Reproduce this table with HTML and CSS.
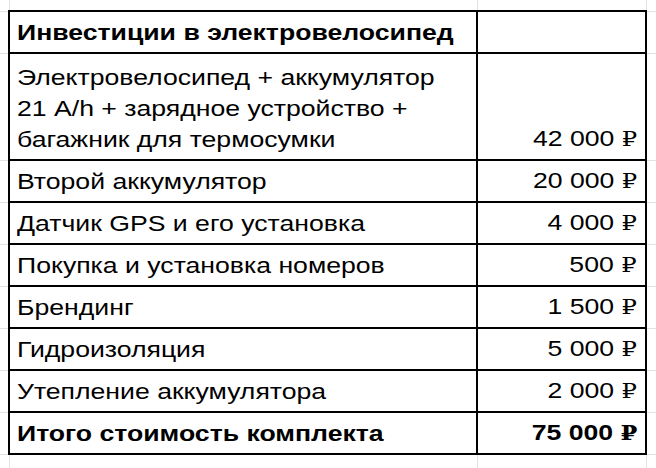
FILE: index.html
```html
<!DOCTYPE html>
<html lang="ru">
<head>
<meta charset="utf-8">
<title>Инвестиции в электровелосипед</title>
<link rel="stylesheet" href="styles.css">
</head>
<body>
<table class="sheet">
  <colgroup>
    <col class="c-edge">
    <col class="c-name">
    <col class="c-sum">
    <col class="c-rest">
  </colgroup>
  <tr class="r-top"><td class="g"></td><td class="g"></td><td class="g"></td><td class="g"></td></tr>
  <tr class="r-one"><td class="g"></td><td class="cell bold"><span class="t">Инвестиции в электровелосипед</span></td><td class="cell num"></td><td class="g"></td></tr>
  <tr class="r-three"><td class="g"></td><td class="cell"><span class="t">Электровелосипед + аккумулятор<br>21 A/h + зарядное устройство +<br>багажник для термосумки</span></td><td class="cell num"><span class="t">42 000 <span class="rub">₽</span></span></td><td class="g"></td></tr>
  <tr class="r-one"><td class="g"></td><td class="cell"><span class="t">Второй аккумулятор</span></td><td class="cell num"><span class="t">20 000 <span class="rub">₽</span></span></td><td class="g"></td></tr>
  <tr class="r-one"><td class="g"></td><td class="cell"><span class="t">Датчик GPS и его установка</span></td><td class="cell num"><span class="t">4 000 <span class="rub">₽</span></span></td><td class="g"></td></tr>
  <tr class="r-one"><td class="g"></td><td class="cell"><span class="t">Покупка и установка номеров</span></td><td class="cell num"><span class="t">500 <span class="rub">₽</span></span></td><td class="g"></td></tr>
  <tr class="r-one"><td class="g"></td><td class="cell"><span class="t">Брендинг</span></td><td class="cell num"><span class="t">1 500 <span class="rub">₽</span></span></td><td class="g"></td></tr>
  <tr class="r-one"><td class="g"></td><td class="cell"><span class="t">Гидроизоляция</span></td><td class="cell num"><span class="t">5 000 <span class="rub">₽</span></span></td><td class="g"></td></tr>
  <tr class="r-one"><td class="g"></td><td class="cell"><span class="t">Утепление аккумулятора</span></td><td class="cell num"><span class="t">2 000 <span class="rub">₽</span></span></td><td class="g"></td></tr>
  <tr class="r-one"><td class="g"></td><td class="cell bold"><span class="t">Итого стоимость комплекта</span></td><td class="cell num bold"><span class="t">75 000 <span class="rub">₽</span></span></td><td class="g"></td></tr>
  <tr class="r-bottom"><td class="g"></td><td class="g"></td><td class="g"></td><td class="g"></td></tr>
</table>
</body>
</html>
```

FILE: styles.css
```css
html, body {
  margin: 0;
  padding: 0;
  background: #ffffff;
}

body {
  width: 656px;
  height: 468px;
  overflow: hidden;
  font-family: "Liberation Sans", Arial, sans-serif;
  font-size: 22px;
  color: #000000;
}

.sheet {
  border-collapse: collapse;
  table-layout: fixed;
  width: 666px;
}

.c-edge { width: 9px; }
.c-name { width: 468px; }
.c-sum { width: 169px; }
.c-rest { width: 20px; }

.sheet td {
  padding: 0;
  border: 1px solid #e2e2e2;
}

.r-top td {
  height: 10px;
  border-top: none;
}

.r-bottom td {
  height: 20px;
  border-bottom: none;
}

.sheet td:first-child {
  border-left: none;
}

.r-one { height: 42px; }
.r-three { height: 107px; }

.sheet td.cell {
  border: 2px solid #000000;
  vertical-align: bottom;
  padding: 0 8px 4px 7px;
  line-height: 31px;
  white-space: nowrap;
  overflow: visible;
}

.t {
  display: inline-block;
  transform: scaleX(1.21);
  transform-origin: left bottom;
}

.num {
  text-align: right;
}

.num .t {
  transform-origin: right bottom;
}

.bold {
  font-weight: bold;
}

.rub {
  font-family: "DejaVu Serif", serif;
  font-size: 20px;
}
```
